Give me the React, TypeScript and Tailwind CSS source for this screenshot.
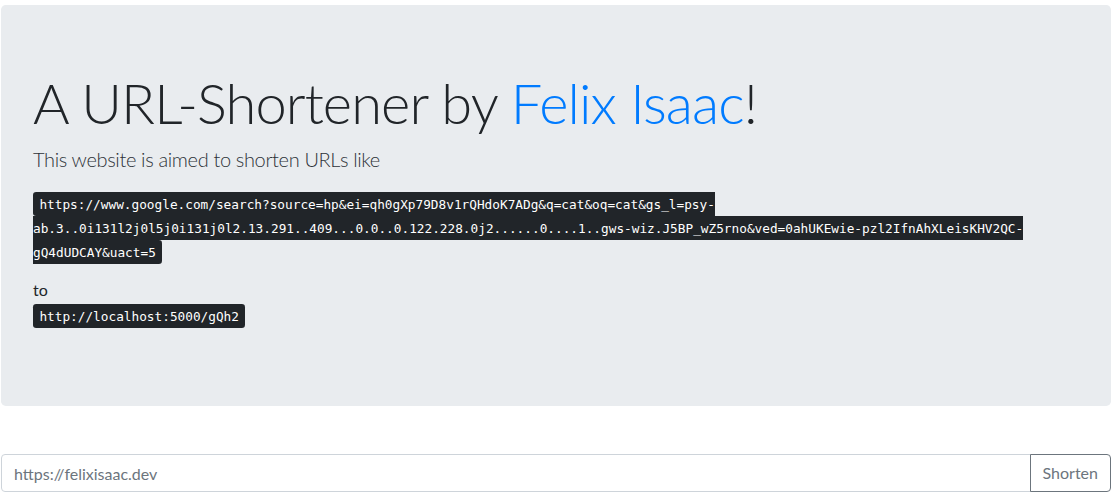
import React from "react";

const longUrl =
  "https://www.google.com/search?source=hp&ei=qh0gXp79D8v1rQHdoK7ADg&q=cat&oq=cat&gs_l=psy-ab.3..0i131l2j0l5j0i131j0l2.13.291..409...0.0..0.122.228.0j2......0....1..gws-wiz.J5BP_wZ5rno&ved=0ahUKEwie-pzl2IfnAhXLeisKHV2QC-gQ4dUDCAY&uact=5";

function Kbd({ children }: { children: React.ReactNode }) {
  return (
    <kbd className="bg-[#212529] text-white rounded-[3.2px] px-[6.4px] py-[4.5px] leading-4 font-['DejaVu_Sans_Mono',monospace] text-[12.75px]">
      {children}
    </kbd>
  );
}

export default function App() {
  return (
    <div className="pt-[5px] pl-[1px] pr-[5px] font-['Lato',sans-serif] text-[#212529]">
      <div className="bg-[#e9ecef] rounded-[4.8px] px-8 py-16">
        <h1 className="text-[56px] font-light leading-[1.2] tracking-[-0.9px] mb-2">
          A URL-Shortener by <span className="text-[#007bff]">Felix Isaac</span>!
        </h1>
        <p className="text-[20px] font-light leading-[1.5] tracking-[-0.35px] mb-4 text-[#2d3238]">
          This website is aimed to shorten URLs like
        </p>
        <p className="text-base leading-6 mb-4">
          <Kbd>{longUrl}</Kbd>
        </p>
        <p className="text-base leading-6 mb-4">
          to
          <br />
          <Kbd>http://localhost:5000/gQh2</Kbd>
        </p>
      </div>
      <form className="mt-[48px] flex" onSubmit={(e) => e.preventDefault()}>
        <input
          type="text"
          placeholder="https://felixisaac.dev"
          className="flex-1 min-w-0 h-[38px] border border-[#ced4da] rounded-l-[4px] px-3 py-1.5 text-base text-[#495057] placeholder:text-[#6c757d] bg-white outline-none"
        />
        <button
          type="submit"
          className="-ml-px h-[38px] border border-[#6c757d] rounded-r-[4px] px-3 text-base text-[#6c757d] bg-transparent"
        >
          Shorten
        </button>
      </form>
    </div>
  );
}
